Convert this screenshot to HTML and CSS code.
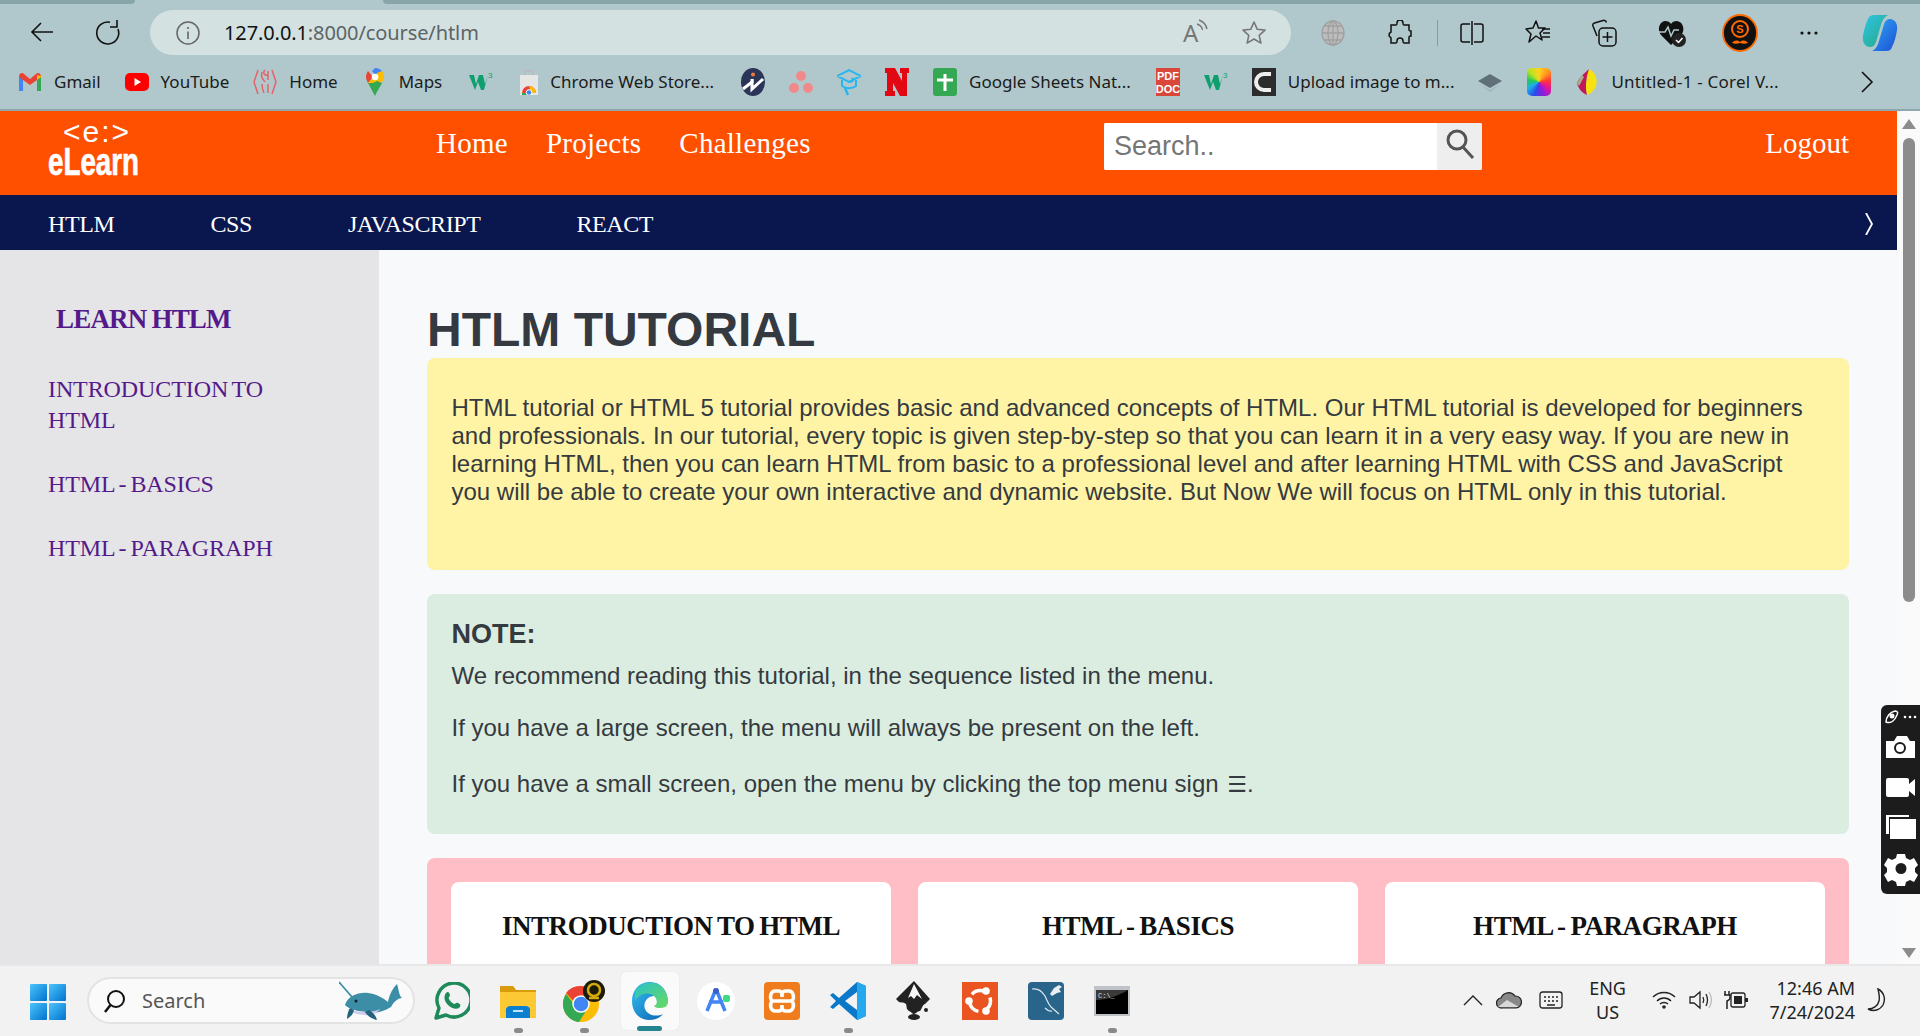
FILE: index.html
```html
<!DOCTYPE html>
<html lang="en">
<head>
<meta charset="utf-8">
<title>HTLM Tutorial</title>
<link rel="stylesheet" href="styles.css">
</head>
<body>
<div class="browser">
  <div class="tabstrip"><span class="tab-dark tab-left"></span><span class="tab-active"></span><span class="tab-dark tab-right"></span></div>
  <div class="toolbar">
    <svg class="tb-btn" width="26" height="26" viewBox="0 0 26 26"><path d="M24 13H3M12 4l-9 9 9 9" fill="none" stroke="#111" stroke-width="1.6"/></svg>
    <svg class="tb-btn reload" width="26" height="30" viewBox="0 0 26 30"><path d="M23 12a11 11 0 1 1-8-6.800" fill="none" stroke="#111" stroke-width="1.6"/><path d="M22 3v7h-7" fill="none" stroke="#111" stroke-width="1.6"/></svg>
    <div class="address">
      <svg width="24" height="24" viewBox="0 0 24 24"><circle cx="12" cy="12" r="11" fill="none" stroke="#666" stroke-width="1.5"/><path d="M12 10.500v7.500" stroke="#666" stroke-width="1.6"/><circle cx="12" cy="7" r="1.100" fill="#666"/></svg>
      <span class="url"><span class="host">127.0.0.1</span>:8000/course/htlm</span>
      <svg class="read" width="28" height="32" viewBox="0 0 28 32"><text x="1" y="25" class="read-a">A</text><path d="M15 7c3 1 5 3 5.500 6M17 3c4 1.500 7 4.500 8 9" fill="none" stroke="#777" stroke-width="1.400"/></svg>
      <svg class="star" width="26" height="26" viewBox="0 0 26 26"><path d="M13 2l3.300 7.300 7.700.8-5.800 5.200 1.700 7.800L13 19l-6.900 4.100 1.700-7.800L2 10.100l7.700-.8z" fill="none" stroke="#777" stroke-width="1.600" stroke-linejoin="round"/></svg>
    </div>
    <div class="tools">
      <svg class="t-globe" width="24" height="26" viewBox="0 0 24 26"><g fill="none" stroke="#a0a0a0" stroke-width="1.300"><ellipse cx="12" cy="13" rx="11" ry="12" fill="#bdbdbd"/><ellipse cx="12" cy="13" rx="5" ry="12"/><path d="M1 13h22M3 6h18M3 20h18M12 1v24"/></g></svg>
      <svg class="t-puzzle" width="24" height="26" viewBox="0 0 24 26"><path d="M9 3a3 3 0 0 1 6 0c0 1 0 2 1 2h5v5c0 1 1 1 2 1v5c-1 0-2 0-2 1v6h-5c-1 0-1-1-1-2a3 3 0 0 0-6 0c0 1 0 2-1 2H3v-5c0-1-2-1-2-3s2-3 2-3V5h5c1 0 1-1 1-2z" fill="none" stroke="#111" stroke-width="1.500"/></svg>
      <span class="t-sep"></span>
      <svg class="t-split" width="24" height="26" viewBox="0 0 24 26"><path d="M10 4H3a2 2 0 0 0-2 2v14a2 2 0 0 0 2 2h7M14 4h7a2 2 0 0 1 2 2v14a2 2 0 0 1-2 2h-7M12 1v24" fill="none" stroke="#111" stroke-width="1.500"/></svg>
      <svg class="t-favs" width="26" height="28" viewBox="0 0 26 28"><path d="M11 2l2.500 7H20l-5 5 2 7-6-4-7 6 2-8-5-5 7-1z" fill="none" stroke="#111" stroke-width="1.500" stroke-linejoin="round"/><path d="M17 10h8M18 14h7M17 18h8" stroke="#111" stroke-width="1.500"/></svg>
      <svg class="t-coll" width="26" height="28" viewBox="0 0 26 28"><path d="M6 17L2 7c-.5-1.500 0-2.500 1.500-3L12 1.500c1.500-.4 3 .5 3.500 2" fill="none" stroke="#111" stroke-width="1.500"/><rect x="8" y="9" width="17" height="18" rx="4" fill="none" stroke="#111" stroke-width="1.500"/><path d="M16.500 13v10M11.500 18h10" stroke="#111" stroke-width="1.500"/></svg>
      <svg class="t-heart" width="28" height="28" viewBox="0 0 28 28"><path d="M13 26L3 16C-1 11 1 3 7 2c3 0 5 1 6 3 1-2 3-3 6-3 6 1 8 8 5 13z" fill="#111"/><path d="M0 13h7l3-5 3 9 3-6h5" fill="none" stroke="#b0c8cc" stroke-width="1.500"/><circle cx="21" cy="21" r="7" fill="#222"/><path d="M18 21l2.500 2.500 4-4.500" fill="none" stroke="#fff" stroke-width="1.500"/></svg>
      <svg class="t-avatar" width="36" height="38" viewBox="0 0 36 38"><ellipse cx="18" cy="19" rx="17" ry="18" fill="#111" stroke="#ff6a00" stroke-width="1.800"/><circle cx="18" cy="15" r="8" fill="none" stroke="#ff6a00" stroke-width="2"/><text x="18" y="19" class="avatar-s">S</text><path d="M10 29c3-3 5-3 8-1 3-2 5-2 8 1-3 1-5 1-8 0-3 1-5 1-8 0z" fill="#ff6a00"/></svg>
      <svg class="t-dots" width="18" height="4" viewBox="0 0 18 4"><circle cx="2" cy="2" r="1.600" fill="#111"/><circle cx="9" cy="2" r="1.600" fill="#111"/><circle cx="16" cy="2" r="1.600" fill="#111"/></svg>
      <svg class="t-copilot" width="36" height="38" viewBox="0 0 36 38"><defs><linearGradient id="cp1" x1="0" y1="0" x2="1" y2="1"><stop offset="0" stop-color="#2fc4ea"/><stop offset="1" stop-color="#25a87c"/></linearGradient><linearGradient id="cp2" x1="0" y1="0" x2="1" y2="1"><stop offset="0" stop-color="#30a9f0"/><stop offset="1" stop-color="#1c4fd8"/></linearGradient></defs><path d="M12 1h14c-4 2-6 6-7 10l-5 17c-1 3-3 5-6 5-5 0-8-5-7-11 1-7 3-13 5-17 1-3 3-4 6-4z" fill="url(#cp1)"/><path d="M24 37H10c4-2 6-6 7-10l5-17c1-3 3-5 6-5 5 0 8 5 7 11-1 7-3 13-5 17-1 3-3 4-6 4z" fill="url(#cp2)"/></svg>
    </div>
  </div>
  <div class="bookmarks">
    <a class="bm bm-gmail"><svg width="24" height="20" viewBox="0 0 24 20"><path d="M1 19V4l4 3v12z" fill="#4285f4"/><path d="M23 19V4l-4 3v12z" fill="#34a853"/><path d="M1 5c0-4 3-5 5-3l6 5 6-5c2-2 5-1 5 3l-4 3-7 5-7-5z" fill="#ea4335"/><path d="M19 3l4 1v1l-4 3z" fill="#fbbc04"/></svg><span>Gmail</span></a>
    <a class="bm bm-yt"><svg width="24" height="18" viewBox="0 0 24 18"><rect width="24" height="18" rx="5" fill="#f00"/><path d="M9.500 5l6.500 4-6.500 4z" fill="#fff"/></svg><span>YouTube</span></a>
    <a class="bm bm-home"><svg width="24" height="28" viewBox="0 0 24 28"><g fill="none" stroke="#e5626a" stroke-width="1.500"><path d="M5 2L1 14l4 12M19 2l4 12-4 12"/><path d="M9 4c-2 6 2 8 3 10M15 3v9M9 16c0 4 1 7 2 9M15 16v9M12 2c-3 3 0 6 3 5"/></g></svg><span>Home</span></a>
    <a class="bm bm-maps"><svg width="18" height="28" viewBox="0 0 18 28"><path d="M9 0a9 9 0 0 1 7 3l-5 6-5-6z" fill="#4285f4"/><path d="M2 3a9 9 0 0 0-2 6c0 2 1 4 2 6l5-6z" fill="#ea4335"/><path d="M16 3a9 9 0 0 1 0 11L10 21l-8-6 9-10z" fill="#fbbc04"/><path d="M2 15l7 13c2-5 5-9 7-13l-5-2-4 2z" fill="#34a853"/><circle cx="9" cy="9" r="3.300" fill="#fff"/></svg><span>Maps</span></a>
    <a class="bm bm-w3"><svg width="24" height="20" viewBox="0 0 24 20"><path d="M0 3h5l2 9 3-9h4l2 9 3-9h0l-4 15h-3l-3-8-3 8H6z" fill="#0e9f6e"/><text x="19" y="6" class="sup3">3</text></svg></a>
    <a class="bm bm-store"><svg width="20" height="26" viewBox="0 0 20 26"><rect x="1" y="6" width="18" height="20" fill="#e6e6e6"/><path d="M6 6V2h8v4" fill="none" stroke="#bbb" stroke-width="1.500"/><path d="M3 24a7 7 0 0 1 14 0z" fill="#ea4335"/><path d="M10 17a7 7 0 0 1 7 7h-5z" fill="#fbbc04"/><path d="M3 24a7 7 0 0 0 0 0h9l-2 2H3z" fill="#34a853"/><circle cx="10" cy="23.500" r="2.800" fill="#4285f4" stroke="#fff"/></svg><span>Chrome Web Store...</span></a>
    <a class="bm bm-i"><svg width="24" height="28" viewBox="0 0 24 28"><ellipse cx="12" cy="14" rx="12" ry="14" fill="#2b3557"/><path d="M2 21l9-7v7l11-10" fill="none" stroke="#fff" stroke-width="3"/><path d="M11 11v4" stroke="#fff" stroke-width="3"/><circle cx="12" cy="6.500" r="2" fill="#f4793b"/></svg></a>
    <a class="bm"><svg width="24" height="24" viewBox="0 0 24 24"><circle cx="12" cy="6" r="5" fill="#f08a8a"/><circle cx="5" cy="18" r="5" fill="#f08a8a"/><circle cx="19" cy="18" r="5" fill="#f08a8a"/></svg></a>
    <a class="bm"><svg width="24" height="28" viewBox="0 0 24 28"><path d="M0 8l12-6 12 6-12 6z M5 12v6c4 3 10 3 14 0v-6M12 14c3 0 5-2 3-4" fill="none" stroke="#27b6ef" stroke-width="2"/><path d="M8 20l3 7" stroke="#27b6ef" stroke-width="2.500"/></svg></a>
    <a class="bm"><svg width="24" height="28" viewBox="0 0 24 28"><path d="M0 0h10l7 13V5h-2V0h9v5h-2v23h-7L8 15v8h2v5H0v-5h2V5H0z" fill="#e30613"/></svg></a>
    <a class="bm bm-sheets"><svg width="24" height="28" viewBox="0 0 24 28"><rect width="24" height="28" rx="3" fill="#34a853"/><path d="M12 6v17M4 12h16" stroke="#fff" stroke-width="3"/></svg><span>Google Sheets Nat...</span></a>
    <a class="bm bm-pdf"><svg width="24" height="28" viewBox="0 0 24 28"><rect width="24" height="28" fill="#d8473a"/><text x="12" y="12" class="pdf-t">PDF</text><text x="12" y="25" class="pdf-t">DOC</text></svg></a>
    <a class="bm"><svg width="24" height="20" viewBox="0 0 24 20"><path d="M0 3h5l2 9 3-9h4l2 9 3-9h0l-4 15h-3l-3-8-3 8H6z" fill="#0e9f6e"/><text x="19" y="6" class="sup3">3</text></svg></a>
    <a class="bm bm-c"><svg width="24" height="28" viewBox="0 0 24 28"><rect width="24" height="28" fill="#2c2c2c"/><path d="M19 6H12a8 8 0 0 0 0 16h7" fill="none" stroke="#eee" stroke-width="4"/></svg><span>Upload image to m...</span></a>
    <a class="bm"><svg width="24" height="20" viewBox="0 0 24 20"><path d="M12 2l12 7-12 7L0 9z" fill="#5f7079"/><path d="M2 12l10 6 10-6-10 8z" fill="#a6b4b8"/></svg></a>
    <a class="bm bm-wheel"><span class="wheel"></span></a>
    <a class="bm bm-corel"><svg width="20" height="26" viewBox="0 0 20 26"><path d="M12 0c6 3 9 10 7 17-2 5-6 8-9 9-2-7-1-18 2-26z" fill="#f6e20f"/><path d="M12 0C6 5 1 11 0 14c1 5 5 10 10 12-2-7-1-18 2-26z" fill="#c2185b"/><path d="M0 14L5 6l2 2-5 9z" fill="#a3b18a"/></svg><span>Untitled-1 - Corel V...</span></a>
    <svg class="bm-more" width="14" height="22" viewBox="0 0 14 22"><path d="M2 1l10 10L2 21" fill="none" stroke="#111" stroke-width="1.600"/></svg>
  </div>
</div>

<div class="viewport">
  <div class="site">
    <header class="site-head">
      <a class="logo">
        <svg width="100" height="60" viewBox="0 0 100 60">
          <text x="49" y="21" class="logo-top">&lt;e:&gt;</text>
          <text x="0" y="54" class="logo-main" textLength="91" lengthAdjust="spacingAndGlyphs">eLearn</text>
        </svg>
      </a>
      <nav class="main-nav"><a>Home</a><a>Projects</a><a>Challenges</a></nav>
      <form class="search"><input class="search-input" type="text" placeholder="Search.."><button class="search-btn" type="button"><svg width="30" height="32" viewBox="0 0 30 32"><circle cx="12" cy="12" r="9" fill="none" stroke="#555" stroke-width="3"/><path d="M18 19l10 11" stroke="#555" stroke-width="3"/></svg></button></form>
      <a class="logout">Logout</a>
    </header>
    <nav class="sub-nav">
      <a>HTLM</a><a>CSS</a><a>JAVASCRIPT</a><a>REACT</a>
      <svg class="sub-chevron" width="9" height="22" viewBox="0 0 9 22"><path d="M1 0l6 11-6 11" fill="none" stroke="#fff" stroke-width="1.800"/></svg>
    </nav>
    <div class="columns">
      <aside class="sidebar">
        <h2 class="side-title">LEARN HTLM</h2>
        <ul class="side-list">
          <li>INTRODUCTION TO HTML</li>
          <li>HTML - BASICS</li>
          <li>HTML - PARAGRAPH</li>
        </ul>
      </aside>
      <main class="content">
        <h1 class="page-title">HTLM TUTORIAL</h1>
        <section class="panel panel-yellow">
          <p>HTML tutorial or HTML 5 tutorial provides basic and advanced concepts of HTML. Our HTML tutorial is developed for beginners and professionals. In our tutorial, every topic is given step-by-step so that you can learn it in a very easy way. If you are new in learning HTML, then you can learn HTML from basic to a professional level and after learning HTML with CSS and JavaScript you will be able to create your own interactive and dynamic website. But Now We will focus on HTML only in this tutorial.</p>
        </section>
        <section class="panel panel-green">
          <h3 class="note-title">NOTE:</h3>
          <p class="note-1">We recommend reading this tutorial, in the sequence listed in the menu.</p>
          <p class="note-2">If you have a large screen, the menu will always be present on the left.</p>
          <p class="note-3">If you have a small screen, open the menu by clicking the top menu sign <span class="menu-sign">☰</span>.</p>
        </section>
        <section class="panel panel-pink">
          <div class="card">INTRODUCTION TO HTML</div>
          <div class="card">HTML - BASICS</div>
          <div class="card">HTML - PARAGRAPH</div>
        </section>
      </main>
    </div>
  </div>
  <div class="scrollbar">
    <span class="arrow-up"></span>
    <span class="thumb"></span>
    <span class="arrow-down"></span>
  </div>
  <div class="capture-bar">
    <svg width="39" height="189" viewBox="0 0 39 189">
      <g fill="#fff">
        <path d="M5 17c0-5 4-10 9-11 3 0 3 2 2 4-2 5-6 9-11 7z" fill="none" stroke="#fff" stroke-width="1.500"/><circle cx="11" cy="11" r="2.500"/>
        <circle cx="24" cy="12" r="1.300"/><circle cx="29" cy="12" r="1.300"/><circle cx="34" cy="12" r="1.300"/>
        <path d="M5 36h8l3-5h10l3 5h5v17H5z"/>
        <path d="M5 75a2 2 0 0 1 2-2h19a2 2 0 0 1 2 2v4l6-5v17l-6-5v4a2 2 0 0 1-2 2H7a2 2 0 0 1-2-2z"/>
        <path d="M5 110h23v2H8v17H5z"/><rect x="9" y="114" width="26" height="20"/>
        <path d="M16 149h8l1 4 4 2 4-2 4 7-3 3v4l3 3-4 7-4-2-4 2-1 4h-8l-1-4-4-2-4 2-4-7 3-3v-4l-3-3 4-7 4 2 4-2z"/>
      </g>
      <circle cx="19" cy="43" r="5" fill="none" stroke="#1c1c1c" stroke-width="2"/>
      <circle cx="20" cy="163.500" r="5.500" fill="#1c1c1c"/>
    </svg>
  </div>
</div>

<footer class="taskbar">
  <svg class="win" width="36" height="36" viewBox="0 0 36 36"><defs><linearGradient id="wn" x1="0" y1="0" x2="1" y2="1"><stop offset="0" stop-color="#4cc4fb"/><stop offset="1" stop-color="#0073cf"/></linearGradient></defs><g fill="url(#wn)"><rect width="17" height="17" rx="1"/><rect x="19" width="17" height="17" rx="1"/><rect y="19" width="17" height="17" rx="1"/><rect x="19" y="19" width="17" height="17" rx="1"/></g></svg>
  <div class="task-search">
    <svg width="24" height="26" viewBox="0 0 24 26"><circle cx="13" cy="11" r="8" fill="none" stroke="#111" stroke-width="2"/><path d="M7.500 17L2 24" stroke="#111" stroke-width="2.500"/></svg>
    <span>Search</span>
    <svg class="whale" width="64" height="40" viewBox="0 0 64 40"><path d="M0 1l13 15" fill="none" stroke="#3b8ea5" stroke-width="1.800"/><path d="M6 24c3-9 13-13 23-12 9 1 15 5 20 9 1-5 3-12 9-18 2 6 2 12 5 14-3 0-8 3-11 9-8 5-17 7-25 5-8-1-16-2-21-7z" fill="#3b8ea5"/><path d="M9 28c8 3 22 5 32 0-3 5-10 7-16 6-7-1-13-2-16-6z" fill="#cdc9ec"/><path d="M15 29c-1 5-4 7-7 9 0-3 1-8 3-11zM30 29c4 2 7 6 8 10-4-1-9-3-12-8z" fill="#24647a"/><circle cx="17" cy="20" r="1.500" fill="#123"/></svg>
  </div>
  <div class="apps">
    <span class="app"><svg width="36" height="38" viewBox="0 0 36 38"><path d="M2 36l3-10A17 17 0 1 1 12 33z" fill="none" stroke="#1e8a5a" stroke-width="3.500" stroke-linejoin="round"/><path d="M12 11c2-2 3-1 4 2 0 2-2 2-1 4 1 2 3 4 5 5 2 0 2-2 4-1 3 1 3 3 1 5-3 2-8 0-11-3-3-3-5-8-2-12z" fill="#1e8a5a"/></svg></span>
    <span class="app running"><svg width="36" height="36" viewBox="0 0 36 36"><path d="M0 3h13l3 4h20v28H0z" fill="#fcc934"/><path d="M0 3h13l3 4h20v2H0z" fill="#d99a0c"/><path d="M6 28a4 4 0 0 1 4-5h16a4 4 0 0 1 4 5v7H6z" fill="#0b7fd0"/><path d="M13 28h10" stroke="#bfe3fa" stroke-width="2"/></svg></span>
    <span class="app running"><svg width="42" height="42" viewBox="0 0 42 42"><circle cx="18" cy="24" r="18" fill="#fbbc04"/><path d="M18 6a18 18 0 0 1 16 10H18a8 8 0 0 0-7.500 5L3 13A18 18 0 0 1 18 6z" fill="#ea4335"/><path d="M3 14a18 18 0 0 0 13 28l7-11a8 8 0 0 1-12-7z" fill="#34a853"/><circle cx="18" cy="24" r="8" fill="#4285f4" stroke="#fff" stroke-width="1.500"/><circle cx="31" cy="11" r="11" fill="#1c1a08"/><circle cx="31" cy="10" r="6" fill="none" stroke="#d4a90d" stroke-width="2.500"/><path d="M26 18h10" stroke="#d4a90d" stroke-width="2.500"/></svg></span>
    <span class="app active"><svg width="36" height="38" viewBox="0 0 36 38"><defs><linearGradient id="ed1" x1="0" y1="0" x2="1" y2="1"><stop offset="0" stop-color="#35c1f1"/><stop offset="1" stop-color="#0b60b0"/></linearGradient><linearGradient id="ed2" x1="0" y1="0" x2="1" y2="1"><stop offset="0" stop-color="#2cc3c5"/><stop offset="1" stop-color="#66d962"/></linearGradient></defs><path d="M18 0C7 0 0 8 0 19c0 12 8 19 17 19 6 0 11-2 14-6-6 3-15 2-18-5-2-5 1-12 8-13 6 0 9 4 9 7h6C36 9 29 0 18 0z" fill="url(#ed1)"/><path d="M3 9C8 0 26-4 33 9c4 7 4 14 0 16-4 2-10 1-11-1 3-1 4-5 1-9-5-6-16-4-20 4z" fill="url(#ed2)"/></svg></span>
    <span class="app"><svg width="38" height="38" viewBox="0 0 38 38"><circle cx="19" cy="19" r="19" fill="#fff"/><path d="M19 7l-9 22M19 7l9 22M12 20h14" fill="none" stroke="#4285f4" stroke-width="3.500"/><circle cx="19" cy="9" r="3" fill="#3a5fc8"/><rect x="26" y="13" width="7" height="7" rx="2" fill="#3ddc84"/></svg></span>
    <span class="app"><svg width="36" height="38" viewBox="0 0 36 38"><rect width="36" height="38" rx="4" fill="#ef7d1d"/><path d="M11 9h4c3 0 3 3 3 6 0-3 0-6 3-6h4c4 0 6 6 3 10 3 4 1 10-3 10h-4c-3 0-3-3-3-6 0 3 0 6-3 6h-4c-4 0-6-6-3-10-3-4-1-10 3-10zM8 19h20" fill="none" stroke="#fff" stroke-width="3.500"/></svg></span>
    <span class="app running"><svg width="36" height="38" viewBox="0 0 36 38"><path d="M27 0l9 4v30l-9 4L9 22l-6 5-3-2 6-6-6-6 3-2 6 5z" fill="#0a78c8"/><path d="M27 0l9 4v30l-9 4z" fill="#24a9ee"/><path d="M27 10L15 19l12 9z" fill="#f2f2f2"/></svg></span>
    <span class="app"><svg width="36" height="40" viewBox="0 0 36 40"><path d="M18 0L0 18l3 3c3 1 5 0 7 2 1 3 0 5 3 7 3 1 3 3 5 3s3-3 6-3c2-2 2-6 5-7l5-5z" fill="#222"/><path d="M18 3l-6 14 3-2 3 3 3-4 5 4z" fill="#f5f5f5"/><ellipse cx="18" cy="36" rx="6" ry="3" fill="#222"/><circle cx="30" cy="29" r="2" fill="#222"/></svg></span>
    <span class="app"><svg width="36" height="38" viewBox="0 0 36 38"><rect width="36" height="38" fill="#e95420"/><circle cx="18" cy="19" r="10.500" fill="none" stroke="#fff" stroke-width="3.500" stroke-dasharray="14 8" stroke-dashoffset="4"/><circle cx="7" cy="19" r="3.800" fill="#fff"/><circle cx="24" cy="9" r="3.800" fill="#fff"/><circle cx="24" cy="29" r="3.800" fill="#fff"/></svg></span>
    <span class="app"><svg width="36" height="38" viewBox="0 0 36 38"><rect width="36" height="38" rx="4" fill="#29648a"/><path d="M4 7c6-1 10 2 13 7 2 4 3 8 6 11l8 7M24 29c-3 1-5-1-7-3" fill="none" stroke="#dde8ee" stroke-width="1.200"/><path d="M26 6l5-3 3 2-3 2 2 3-4 1-5 3-2-2z" fill="#e8eef2"/></svg></span>
    <span class="app running"><svg width="36" height="30" viewBox="0 0 36 30"><rect width="36" height="30" fill="#bfc3c7"/><rect x="2" y="4" width="32" height="24" fill="#000"/><path d="M2 14c10 0 22-4 32-10H2z" fill="#3a3a3a"/><text x="4" y="12" class="cmd-t">C:\_</text></svg></span>
  </div>
  <div class="tray">
    <svg class="tr-chev" width="20" height="12" viewBox="0 0 20 12"><path d="M1 11l9-9 9 9" fill="none" stroke="#222" stroke-width="1.400"/></svg>
    <svg class="tr-cloud" width="26" height="18" viewBox="0 0 26 18"><path d="M6 17a5 5 0 0 1-1-10 8 8 0 0 1 14-2 6 6 0 0 1 1 12z" fill="#888" stroke="#222" stroke-width="1.200"/><path d="M2 16l9-7 12 7z" fill="#d8d8d8"/></svg>
    <svg class="tr-kbd" width="24" height="18" viewBox="0 0 24 18"><rect x="1" y="1" width="22" height="16" rx="2.500" fill="none" stroke="#222" stroke-width="1.300"/><path d="M5 6h2M9 6h2M13 6h2M17 6h2M5 10h2M9 10h2M13 10h2M17 10h2M8 14h8" stroke="#222" stroke-width="1.400"/></svg>
    <div class="tr-lang">ENG<br>US</div>
    <svg class="tr-wifi" width="24" height="18" viewBox="0 0 24 18"><g fill="none" stroke="#222" stroke-width="1.500"><path d="M1 6c6-6 16-6 22 0M5 10c4-4 10-4 14 0M8 13c2-2 6-2 8 0"/></g><circle cx="12" cy="16" r="1.800" fill="#222"/></svg>
    <svg class="tr-vol" width="24" height="20" viewBox="0 0 24 20"><path d="M1 7h4l6-5v16l-6-5H1z" fill="none" stroke="#222" stroke-width="1.300"/><path d="M14 7c1 2 1 4 0 6M17 4c2 4 2 8 0 12" fill="none" stroke="#222" stroke-width="1.300"/><path d="M20 2c3 5 3 11 0 16" fill="none" stroke="#bbb" stroke-width="1.300"/></svg>
    <svg class="tr-batt" width="24" height="20" viewBox="0 0 24 20"><path d="M1 1v4M5 1v4M0 5h6v3c0 2-1 2-3 3v8" fill="none" stroke="#222" stroke-width="1.500"/><rect x="7" y="3" width="14" height="14" rx="2" fill="none" stroke="#222" stroke-width="1.300"/><rect x="10" y="6" width="8" height="8" fill="#222"/><rect x="21" y="8" width="3" height="4" fill="#222"/></svg>
    <div class="tr-clock"><span>12:46 AM</span><span>7/24/2024</span></div>
    <svg class="tr-moon" width="20" height="24" viewBox="0 0 20 24"><path d="M11 1c6 3 8 10 5 16-3 5-9 7-15 4 5 0 10-3 11-8 1-4 0-8-1-12z" fill="none" stroke="#222" stroke-width="1.400"/></svg>
  </div>
</footer>
</body>
</html>
```

FILE: styles.css
```css
* { box-sizing: border-box; }
html, body { margin: 0; padding: 0; height: 100%; overflow: hidden; }
body { width: 1920px; height: 1036px; display: flex; flex-direction: column; position: relative; font-family: "Liberation Sans", Arial, sans-serif; }
a { color: inherit; text-decoration: none; }
h1, h2, h3, p, ul { margin: 0; padding: 0; }

/* browser frame */
.browser { height: 111px; flex: none; background: #b0c8cc; border-bottom: 2px solid #8fa8ad; font-family: "Noto Sans", sans-serif; }
.tabstrip { height: 4px; display: flex; }
.tab-dark { background: #88a5aa; height: 4px; }
.tab-left { width: 135px; border-bottom-right-radius: 4px; }
.tab-active { width: 248px; }
.tab-right { flex: 1; border-bottom-left-radius: 4px; }
.toolbar { height: 51px; padding-top: 6px; display: flex; align-items: flex-start; }
.tb-btn { margin: 9px 0 0 29px; flex: none; }
.reload { margin: 7px 0 0 40px; }
.address { width: 1141px; height: 45px; margin-left: 29px; background: #d3e1e1; border-radius: 23px; display: flex; align-items: center; padding-left: 26px; flex: none; }
.url { margin-left: 24px; font-size: 20px; color: #5c6466; letter-spacing: -0.1px; white-space: nowrap; }
.host { color: #111; }
.read { margin-left: auto; }
.read-a { font: 24px "Noto Sans", sans-serif; fill: #777; }
.star { margin: 0 24px 0 31px; }
.avatar-s { font: bold 11px "Liberation Sans", sans-serif; fill: #ff6a00; text-anchor: middle; }
.tools { position: relative; flex: 1; height: 45px; display: flex; align-items: center; }
.t-globe { margin-left: 30px; }
.t-puzzle { margin-left: 43px; }
.t-sep { width: 1px; height: 26px; background: #8b9a9e; margin-left: 25px; }
.t-split { margin-left: 22px; }
.t-favs { margin-left: 41px; }
.t-coll { margin-left: 40px; }
.t-heart { margin-left: 41px; }
.t-avatar { margin-left: 36px; }
.t-dots { margin-left: 42px; }
.t-copilot { margin-left: 44px; }

.bookmarks { height: 54px; padding: 0 0 0 18px; display: flex; align-items: center; gap: 24px; position: relative; font-size: 17px; color: #1b1b1b; }
.bm { display: flex; align-items: center; gap: 12px; white-space: nowrap; flex: none; }
.bm span { padding-bottom: 2px; }
.bm svg { flex: none; }
.bm-maps { margin-left: 1px; }
.bm-maps svg { margin: 0 3px; }
.bm-w3 { margin-left: 3px; }
.bm-store { gap: 9px; }
.bm-store svg { margin: 0 2px; }
.bm-i { margin-left: 3px; }
.bm-pdf { margin-left: 1px; }
.bm-wheel { margin-left: 1px; }
.bm-corel span { letter-spacing: 0.2px; }
.bm-corel svg { margin: 0 2px; }
.bm-more { margin-left: auto; margin-right: 46px; flex: none; }
.wheel { width: 24px; height: 28px; border-radius: 5px; background: conic-gradient(#ffd21f, #ff9a1f, #ff3b30, #e6188f, #8f1be0, #2a4be8, #1cb0e8, #21c95a, #bfe21f, #ffd21f); }
.sup3 { font: 8px "Liberation Sans", sans-serif; fill: #0e9f6e; }
.pdf-t { font: bold 11px "Liberation Sans", sans-serif; fill: #fff; text-anchor: middle; }
.cmd-t { font: 7px "Liberation Mono", monospace; fill: #ddd; }

/* viewport */
.viewport { flex: 1; min-height: 0; display: flex; position: relative; background: #f8f9fa; overflow: hidden; }
.site { flex: 1; min-width: 0; display: flex; flex-direction: column; font-family: "Liberation Serif", serif; }
.site-head { height: 84px; flex: none; background: #ff5000; color: #fff; display: flex; align-items: flex-start; padding: 0 48px; font-size: 29px; line-height: 34px; }
.logo { width: 388px; flex: none; padding-top: 10px; }
.logo svg { display: block; overflow: visible; }
.logo-top { font: 30px "Liberation Sans", sans-serif; fill: #fff; text-anchor: middle; letter-spacing: 2px; }
.logo-main { font: bold 39px "Liberation Sans", sans-serif; fill: #fff; stroke: #fff; stroke-width: 0.7px; }
.main-nav { width: 668px; flex: none; padding-top: 15px; display: flex; gap: 38px; letter-spacing: 0.25px; }
.search { width: 378px; flex: none; margin-top: 12px; height: 47px; display: flex; background: #fff; border-radius: 2px; overflow: hidden; }
.search-input { flex: 1; min-width: 0; border: 0; outline: 0; background: #fff; padding: 0 10px; font: 27px "Liberation Sans", sans-serif; }
.search-input::placeholder { color: #757575; opacity: 1; }
.search-btn { width: 45px; flex: none; border: 0; background: #eee; padding: 0 0 5px; display: flex; align-items: center; justify-content: center; }
.logout { margin-left: auto; padding-top: 15px; }
.sub-nav { height: 55px; flex: none; background: #0a174e; color: #fff; display: flex; align-items: flex-start; gap: 96px; padding: 15px 23px 0 48px; font-size: 24px; line-height: 28px; letter-spacing: -0.4px; }
.sub-chevron { margin-left: auto; margin-top: 3px; }

.columns { flex: 1; min-height: 0; display: flex; }
.sidebar { width: 379px; flex: none; background: #e5e5e7; padding: 53px 48px 0 48px; color: #541a8b; }
.side-title { font-size: 27px; line-height: 32px; padding-left: 8px; letter-spacing: -0.8px; word-spacing: -1px; }
.side-list { list-style: none; margin-top: 39px; font-size: 24px; line-height: 31px; letter-spacing: -0.1px; word-spacing: -2px; }
.side-list li { margin-bottom: 33px; }

.content { flex: 1; min-width: 0; padding: 52px 48px 0; font-family: "Liberation Sans", sans-serif; color: #343a40; font-size: 24px; line-height: 28px; overflow: hidden; }
.page-title { font-size: 48px; line-height: 56px; font-weight: bold; }
.panel { border-radius: 8px; margin-bottom: 24px; }
.panel-yellow { background: #fff3a5; padding: 36px 24px 64px 24.5px; }
.panel-green { background: #dbede0; padding: 24px 24px 36px 24.5px; }
.note-title { font-size: 27px; line-height: 32px; font-weight: bold; }
.note-1 { margin-top: 12px; }
.note-2 { margin-top: 24px; }
.note-3 { margin-top: 28px; }
.menu-sign { font-family: "DejaVu Sans", sans-serif; font-size: 22px; line-height: 1; margin-left: 2px; }
.panel-pink { background: #ffbec6; padding: 24px; display: flex; gap: 27px; height: 300px; }
.card { flex: 1; background: #fff; border-radius: 8px; padding-top: 28px; text-align: center; font-family: "Liberation Serif", serif; font-weight: bold; font-size: 27px; line-height: 32px; color: #111; letter-spacing: -0.45px; word-spacing: -1.5px; }

.scrollbar { width: 23px; flex: none; background: #fafafa; position: relative; display: flex; flex-direction: column; align-items: center; }
.arrow-up { margin-top: 8px; width: 0; height: 0; border-left: 7px solid transparent; border-right: 7px solid transparent; border-bottom: 10px solid #8c8c8c; }
.thumb { width: 12px; height: 464px; margin-top: 9px; background: #8c8c8c; border-radius: 6px; }
.arrow-down { margin-top: auto; margin-bottom: 6px; width: 0; height: 0; border-left: 7px solid transparent; border-right: 7px solid transparent; border-top: 10px solid #8c8c8c; }
.capture-bar { position: absolute; right: 0; top: 594px; width: 39px; height: 189px; background: #1c1c1c; border-radius: 6px 0 0 6px; }
.capture-bar svg { display: block; }

/* taskbar */
.taskbar { height: 72px; flex: none; background: #f2f2f2; border-top: 2px solid #e8e8e8; display: flex; align-items: flex-start; position: relative; font-family: "Noto Sans", sans-serif; color: #222; }
.win { margin: 18px 0 0 30px; flex: none; }
.task-search { width: 328px; height: 47px; margin: 11px 0 0 21px; background: #fafafa; border: 2px solid #e3e3e3; border-radius: 24px; display: flex; align-items: center; padding-left: 14px; font-size: 20px; color: #555; flex: none; }
.task-search span { margin-left: 15px; }
.whale { margin-left: auto; margin-right: 10px; }
.apps { display: flex; margin-left: 4px; flex: none; }
.app { width: 66px; height: 58px; margin-top: 6px; display: flex; align-items: center; justify-content: center; position: relative; flex: none; }
.app.running::after { content: ""; position: absolute; bottom: -3px; left: 29px; width: 9px; height: 5px; border-radius: 3px; background: #8a8a8a; }
.app.active { background: #fafafa; border-radius: 5px; box-shadow: 0 0 1px #ccc; width: 58px; margin: 6px 4px 0; }
.app.active::after { content: ""; position: absolute; bottom: -1px; left: 16px; width: 25px; height: 5px; border-radius: 3px; background: #23858f; }
.tray { margin-left: auto; padding-right: 33px; display: flex; align-items: center; height: 68px; flex: none; }
.tr-lang { width: 60px; margin-left: 15px; text-align: center; font-size: 18px; line-height: 24px; }
.tr-cloud { margin-left: 13px; }
.tr-kbd { margin-left: 17px; }
.tr-wifi { margin-left: 14px; }
.tr-vol { margin-left: 13px; }
.tr-batt { margin-left: 11px; }
.tr-clock { margin-left: 22px; display: flex; flex-direction: column; align-items: flex-end; font-size: 18px; line-height: 24px; }
.tr-moon { margin-left: 12px; }
```
